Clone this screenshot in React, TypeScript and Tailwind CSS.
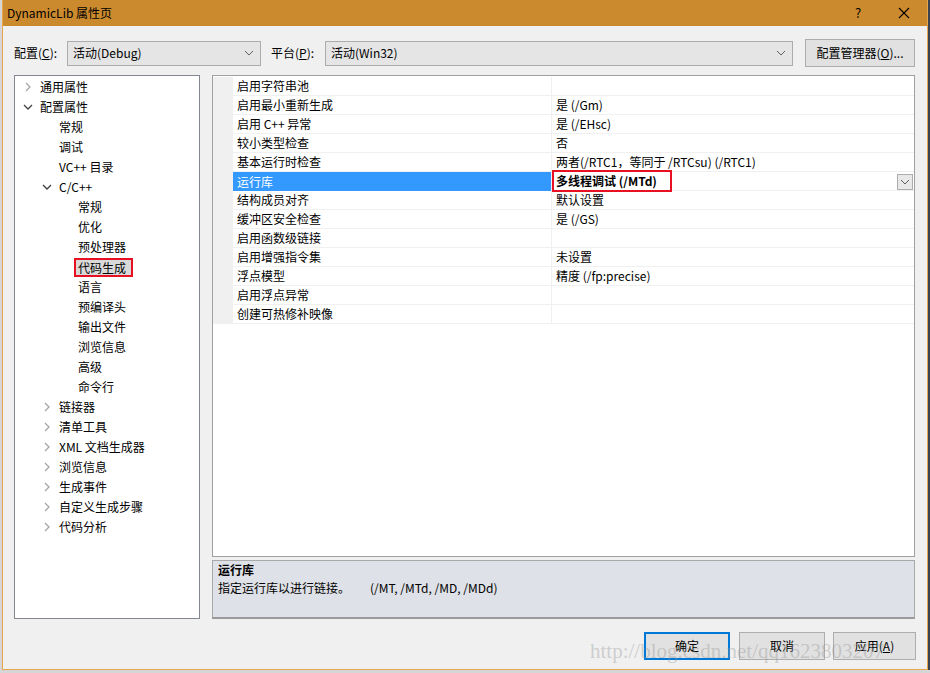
import React from "react";

const FONT = { fontFamily: '"Noto Sans CJK SC", "Noto Sans", sans-serif' };

function Chevron({ open }: { open: boolean }) {
  if (open) {
    return (
      <svg width="12" height="12" viewBox="0 0 12 12">
        <polyline points="2,4 6,8 10,4" fill="none" stroke="#404040" strokeWidth="1.3" />
      </svg>
    );
  }
  return (
    <svg width="12" height="12" viewBox="0 0 12 12">
      <polyline points="4,2 8,6 4,10" fill="none" stroke="#a6a6a6" strokeWidth="1.3" />
    </svg>
  );
}

function ComboChevron() {
  return (
    <svg width="10" height="6" viewBox="0 0 10 6">
      <polyline points="1,1 5,5 9,1" fill="none" stroke="#606060" strokeWidth="1" />
    </svg>
  );
}

type TreeItem = { label: string; level: 0 | 1 | 2; arrow?: "open" | "closed"; selected?: boolean };

const tree: TreeItem[] = [
  { label: "通用属性", level: 0, arrow: "closed" },
  { label: "配置属性", level: 0, arrow: "open" },
  { label: "常规", level: 1 },
  { label: "调试", level: 1 },
  { label: "VC++ 目录", level: 1 },
  { label: "C/C++", level: 1, arrow: "open" },
  { label: "常规", level: 2 },
  { label: "优化", level: 2 },
  { label: "预处理器", level: 2 },
  { label: "代码生成", level: 2, selected: true },
  { label: "语言", level: 2 },
  { label: "预编译头", level: 2 },
  { label: "输出文件", level: 2 },
  { label: "浏览信息", level: 2 },
  { label: "高级", level: 2 },
  { label: "命令行", level: 2 },
  { label: "链接器", level: 1, arrow: "closed" },
  { label: "清单工具", level: 1, arrow: "closed" },
  { label: "XML 文档生成器", level: 1, arrow: "closed" },
  { label: "浏览信息", level: 1, arrow: "closed" },
  { label: "生成事件", level: 1, arrow: "closed" },
  { label: "自定义生成步骤", level: 1, arrow: "closed" },
  { label: "代码分析", level: 1, arrow: "closed" },
];

const spacers: Record<number, string> = { 0: "w-[7px]", 1: "w-[26px]", 2: "w-[45px]" };

const rows: { name: string; value: string; selected?: boolean }[] = [
  { name: "启用字符串池", value: "" },
  { name: "启用最小重新生成", value: "是 (/Gm)" },
  { name: "启用 C++ 异常", value: "是 (/EHsc)" },
  { name: "较小类型检查", value: "否" },
  { name: "基本运行时检查", value: "两者(/RTC1，等同于 /RTCsu) (/RTC1)" },
  { name: "运行库", value: "多线程调试 (/MTd)", selected: true },
  { name: "结构成员对齐", value: "默认设置" },
  { name: "缓冲区安全检查", value: "是 (/GS)" },
  { name: "启用函数级链接", value: "" },
  { name: "启用增强指令集", value: "未设置" },
  { name: "浮点模型", value: "精度 (/fp:precise)" },
  { name: "启用浮点异常", value: "" },
  { name: "创建可热修补映像", value: "" },
];

export default function App() {
  return (
    <div className="w-[930px] h-[673px] bg-[#d6d6d6] flex overflow-hidden text-[12px] text-black" style={FONT}>
      <div className="ml-[2px] w-[926px] h-[670px] flex flex-col bg-[#f0f0f0] border-x border-b border-[#e7a64c] relative">
        {/* Title bar */}
        <div className="h-[26px] bg-[#cc8a2e] flex items-center pl-[4px] shrink-0">
          <span className="leading-[16px]">DynamicLib 属性页</span>
          <div className="flex-1" />
          <span className="w-[46px] text-center text-[13px] leading-[16px]">?</span>
          <div className="w-[46px] flex justify-center">
            <svg width="12" height="12" viewBox="0 0 12 12">
              <path d="M1 1 L11 11 M11 1 L1 11" stroke="#000" strokeWidth="1.1" fill="none" />
            </svg>
          </div>
        </div>

        <div className="flex flex-col pl-[11px] pr-[12px]">
          {/* Config row */}
          <div className="mt-[13px] h-[28px] flex items-center">
            <span className="w-[53px] leading-[16px]">配置(<span className="underline">C</span>):</span>
            <div className="w-[194px] h-[25px] bg-[#e5e5e5] border border-[#acacac] flex items-center pl-[5px] pr-[6px]">
              <span className="flex-1 leading-[16px]">活动(Debug)</span>
              <ComboChevron />
            </div>
            <span className="ml-[10px] w-[54px] leading-[16px]">平台(<span className="underline">P</span>):</span>
            <div className="w-[468px] h-[25px] bg-[#e5e5e5] border border-[#acacac] flex items-center pl-[5px] pr-[6px]">
              <span className="flex-1 leading-[16px]">活动(Win32)</span>
              <ComboChevron />
            </div>
            <div className="ml-[12px] w-[110px] h-[28px] bg-[#e1e1e1] border border-[#adadad] flex items-center justify-center">
              <span className="leading-[16px]">配置管理器(<span className="underline">O</span>)...</span>
            </div>
          </div>

          {/* Main */}
          <div className="mt-[8px] h-[544px] flex">
            {/* Tree */}
            <div className="w-[186px] h-full bg-white border border-[#828790] pt-[1px]">
              {tree.map((t, i) => (
                <div key={i} className="h-[20px] flex items-center">
                  <div className={spacers[t.level]} />
                  <div className="w-[12px] h-[12px] flex items-center justify-center">
                    {t.arrow ? <Chevron open={t.arrow === "open"} /> : null}
                  </div>
                  {t.selected ? (
                    <span className="ml-[2px] h-[19px] flex items-center bg-[#d9d9d9] border-2 border-[#e81123] pl-[2px] pr-[5px] leading-[15px]">
                      {t.label}
                    </span>
                  ) : (
                    <span className="ml-[6px] leading-[16px] whitespace-nowrap">{t.label}</span>
                  )}
                </div>
              ))}
            </div>

            {/* Right panel */}
            <div className="ml-[12px] w-[703px] h-full flex flex-col">
              <div className="h-[482px] bg-white border border-[#a0a0a0] pt-[1px] flex flex-col">
                {rows.map((r, i) => (
                  <div key={i} className="h-[19px] flex shrink-0">
                    <div className="w-[20px] bg-[#f0f0f0]" />
                    <div
                      className={
                        r.selected
                          ? "w-[319px] bg-[#3399ff] text-white flex items-center pl-[4px] border-r border-[#f0f0f0]"
                          : "w-[319px] flex items-center pl-[4px] border-b border-r border-[#f0f0f0]"
                      }
                    >
                      <span className="leading-[16px] whitespace-nowrap">{r.name}</span>
                    </div>
                    <div className="flex-1 relative flex items-center pl-[4px] border-b border-[#f0f0f0]">
                      <span className={r.selected ? "font-bold leading-[16px] whitespace-nowrap" : "leading-[16px] whitespace-nowrap"}>
                        {r.value}
                      </span>
                      {r.selected ? (
                        <>
                          <div className="absolute left-0 top-[-2px] w-[120px] h-[22px] border-2 border-[#e81123]" />
                          <div className="absolute right-[1px] top-[2px] w-[16px] h-[16px] bg-[#e8e8e8] border border-[#acacac] flex items-center justify-center">
                            <ComboChevron />
                          </div>
                        </>
                      ) : null}
                    </div>
                  </div>
                ))}
                <div className="flex-1 flex">
                  <div className="w-[20px]" />
                </div>
              </div>
              <div className="mt-[3px] h-[59px] bg-[#dee1e7] border border-[#a9a9a9] border-b-2 border-b-[#9a9a9a] pl-[5px]">
                <div className="font-bold leading-[18px]">运行库</div>
                <div className="leading-[18px] whitespace-nowrap">
                  指定运行库以进行链接。<span className="ml-[20px]">(/MT, /MTd, /MD, /MDd)</span>
                </div>
              </div>
            </div>
          </div>

          {/* Buttons */}
          <div className="mt-[13px] h-[28px] flex justify-end mr-[-1px]">
            <div className="w-[86px] h-[28px] bg-[#e1e1e1] border-2 border-[#0078d7] flex items-center justify-center">
              <span className="leading-[16px]">确定</span>
            </div>
            <div className="ml-[9px] w-[86px] h-[28px] bg-[#e1e1e1] border border-[#adadad] flex items-center justify-center">
              <span className="leading-[16px]">取消</span>
            </div>
            <div className="ml-[8px] w-[83px] h-[28px] bg-[#e1e1e1] border border-[#adadad] flex items-center justify-center">
              <span className="leading-[16px]">应用(<span className="underline">A</span>)</span>
            </div>
          </div>
        </div>

        {/* Watermark */}
        <div
          className="absolute left-[587px] top-[638px] text-[21px] leading-[26px] text-[rgba(150,150,150,0.4)] pointer-events-none whitespace-nowrap"
          style={{ fontFamily: '"Liberation Serif", serif' }}
        >
          http://blog.csdn.net/qq1623803207
        </div>
      </div>
      <div className="w-[2px] h-[670px] bg-[#3b4350]" />
    </div>
  );
}
